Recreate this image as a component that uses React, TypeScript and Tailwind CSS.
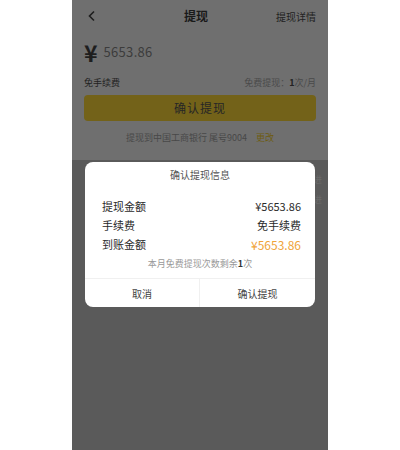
import { useState } from 'react';

const font = { fontFamily: '"Noto Sans CJK SC", "Noto Sans", sans-serif' };

const InfoRow = ({ label, value, accent }: { label: string; value: string; accent?: boolean }) => (
  <div className="flex items-center justify-between h-[19px]">
    <span className="text-[11px] text-[#2a2a2a]">{label}</span>
    <span className={accent ? 'text-[12px] text-[#f0a43a]' : 'text-[11px] text-[#2a2a2a]'}>{value}</span>
  </div>
);

export default function App() {
  const [open] = useState(true);

  return (
    <div className="w-[400px] h-[450px] bg-white flex justify-center" style={font}>
      <div className="relative w-[256px] h-full flex flex-col overflow-hidden">
        {/* page under the dim layer */}
        <div className="h-[160px] bg-[#6f6f6f] px-3 flex flex-col">
          <div className="h-8 flex items-center justify-between">
            <svg width="12" height="12" viewBox="0 0 12 12" className="ml-[2px]">
              <path d="M8 1.5 3.5 6 8 10.5" fill="none" stroke="#1e1e1e" strokeWidth="1.6" />
            </svg>
            <span className="text-[12px] font-bold text-[#1a1a1a] ml-[18px]">提现</span>
            <span className="text-[10px] text-[#222]">提现详情</span>
          </div>
          <div className="flex items-center gap-[6px] mt-[8px] h-6">
            <span className="text-[23px] font-bold text-[#1e1e1e] leading-none">¥</span>
            <span className="text-[13px] text-[#3c3c3c] tracking-[0.3px]">5653.86</span>
          </div>
          <div className="flex items-center justify-between mt-[12px] text-[9px]">
            <span className="text-[#222]">免手续费</span>
            <span className="text-[#4a4a4a]">
              免费提现：<span className="font-bold text-[#222]">1</span>次/月
            </span>
          </div>
          <button className="mt-[5px] h-[26px] rounded bg-[#736219] text-[12px] text-[#262626] tracking-[1px]">
            确认提现
          </button>
          <div className="mt-[10px] text-center text-[9px] text-[#484848]">
            提现到中国工商银行 尾号9004
            <span className="ml-[9px] text-[#6e5c10]">更改</span>
          </div>
        </div>
        <div className="flex-1 bg-[#5a5a5a] flex flex-col pt-[10px]">
          <div className="h-5 flex items-center justify-end px-[6px] text-[9px] text-[#6a6a6a]">进</div>
          <div className="h-5 flex items-center justify-end px-[6px] text-[9px] text-[#6a6a6a]">进</div>
        </div>

        {open && (
          <div className="absolute left-[13px] top-[162px] w-[230px] bg-white rounded-lg flex flex-col">
            <div className="h-6 flex items-center justify-center text-[10px] text-[#555]">确认提现信息</div>
            <div className="flex flex-col pl-[17px] pr-[14px] mt-[11px]">
              <InfoRow label="提现金额" value="¥5653.86" />
              <InfoRow label="手续费" value="免手续费" />
              <InfoRow label="到账金额" value="¥5653.86" accent />
            </div>
            <div className="h-5 flex items-center justify-center text-[9px] text-[#999]">
              本月免费提现次数剩余<span className="font-bold text-[#333]">1</span>次
            </div>
            <div className="mt-[4px] border-t border-[#f0f0f0] grid grid-cols-2 h-[29px]">
              <button className="text-[10px] text-[#444] border-r border-[#f0f0f0]">取消</button>
              <button className="text-[10px] text-[#444]">确认提现</button>
            </div>
          </div>
        )}
      </div>
    </div>
  );
}
